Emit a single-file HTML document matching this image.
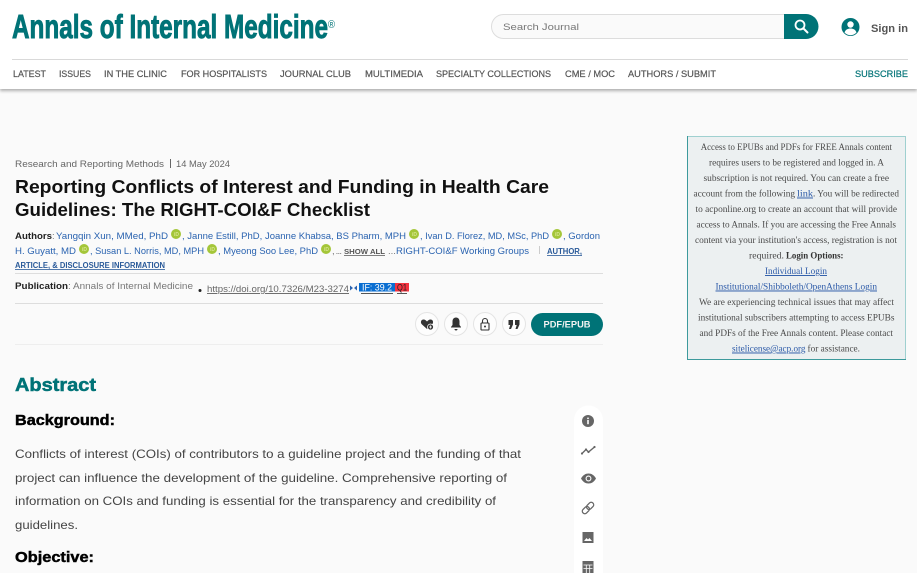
<!DOCTYPE html>
<html lang="en"><head><meta charset="utf-8"><title>Annals of Internal Medicine</title>
<style>
html,body{margin:0;padding:0;width:917px;height:573px;overflow:hidden;background:#fafafa}
#hd{position:absolute;left:0;top:0;width:917px;height:89px;background:#fff;box-shadow:0 2px 3px rgba(0,0,0,.3)}
svg{position:absolute;left:0;top:0;filter:blur(.3px)}
text{font-family:"Liberation Sans",sans-serif}
.nav{font-size:9.5px;fill:#555;stroke:#555;stroke-width:.2}
.meta{font-size:9.5px;fill:#666}
.title{font-size:18px;font-weight:700;fill:#111}
.au{font-size:9.5px;fill:#2a63b0}
.bk{font-size:9.5px;font-weight:700;fill:#222}
.gr{font-size:9.5px;fill:#777}
.sm{font-size:8px;font-weight:700;fill:#2a5a99}
.body{font-size:12px;fill:#444}
.h{font-size:15px;font-weight:700;fill:#000;stroke:#000;stroke-width:.45}
.s{font-family:"Liberation Serif",serif;font-size:9.5px;fill:#4a4a4a}
.sl{font-family:"Liberation Serif",serif;font-size:9.5px;fill:#2c5aa8}
.o{fill:#a4c639}
.i{font-size:5px;fill:#d6e58f;font-weight:700}
</style></head><body>
<div id="hd"></div>
<svg width="917" height="573" viewBox="0 0 917 573" xmlns="http://www.w3.org/2000/svg">
<!-- logo -->
<text x="12" y="38" font-size="33" font-weight="700" fill="#007377" stroke="#007377" stroke-width=".9" textLength="316" lengthAdjust="spacingAndGlyphs">Annals of Internal Medicine</text>
<text x="328" y="28" font-size="11" fill="#007377" textLength="7" lengthAdjust="spacingAndGlyphs">®</text>
<!-- search -->
<rect x="491.500" y="14.500" width="326" height="24" rx="12" fill="#fafafa" stroke="#ddd"/>
<path d="M784 14h22a12.500 12.500 0 0 1 0 25h-22z" fill="#007377"/>
<circle cx="800" cy="25" r="4.500" fill="none" stroke="#fff" stroke-width="1.800"/><path d="M803.500 28.500l4 4" stroke="#fff" stroke-width="2" stroke-linecap="round"/>
<text x="503" y="30" font-size="9.500" fill="#777" textLength="76" lengthAdjust="spacingAndGlyphs">Search Journal</text>
<circle cx="850.500" cy="27" r="9" fill="#007377"/><circle cx="850.500" cy="24.500" r="3.200" fill="#fff"/><path d="M844.500 32.500c1-3 3.500-4 6-4s5 1 6 4a8 8 0 0 1-12 0z" fill="#fff"/>
<text x="871" y="32" font-size="11" font-weight="700" fill="#555" textLength="37" lengthAdjust="spacingAndGlyphs">Sign in</text>
<!-- nav -->
<rect x="12" y="59" width="896" height="1" fill="#d9d9d9"/>
<text class="nav" x="13" y="77" textLength="33" lengthAdjust="spacingAndGlyphs">LATEST</text>
<text class="nav" x="59" y="77" textLength="32" lengthAdjust="spacingAndGlyphs">ISSUES</text>
<text class="nav" x="104" y="77" textLength="63" lengthAdjust="spacingAndGlyphs">IN THE CLINIC</text>
<text class="nav" x="181" y="77" textLength="86" lengthAdjust="spacingAndGlyphs">FOR HOSPITALISTS</text>
<text class="nav" x="280" y="77" textLength="71" lengthAdjust="spacingAndGlyphs">JOURNAL CLUB</text>
<text class="nav" x="365" y="77" textLength="58" lengthAdjust="spacingAndGlyphs">MULTIMEDIA</text>
<text class="nav" x="436" y="77" textLength="115" lengthAdjust="spacingAndGlyphs">SPECIALTY COLLECTIONS</text>
<text class="nav" x="565" y="77" textLength="50" lengthAdjust="spacingAndGlyphs">CME / MOC</text>
<text class="nav" x="628" y="77" textLength="88" lengthAdjust="spacingAndGlyphs">AUTHORS / SUBMIT</text>
<text class="nav" x="855" y="77" textLength="53" lengthAdjust="spacingAndGlyphs" style="fill:#007377;stroke:#007377">SUBSCRIBE</text>
<!-- meta -->
<text class="meta" x="15" y="167" textLength="149" lengthAdjust="spacingAndGlyphs">Research and Reporting Methods</text>
<rect x="170" y="159" width="1" height="9" fill="#666"/>
<text class="meta" x="176" y="167" textLength="54" lengthAdjust="spacingAndGlyphs">14 May 2024</text>
<!-- title -->
<text class="title" x="15" y="193" textLength="534" lengthAdjust="spacingAndGlyphs">Reporting Conflicts of Interest and Funding in Health Care</text>
<text class="title" x="15" y="216" textLength="355" lengthAdjust="spacingAndGlyphs">Guidelines: The RIGHT-COI&amp;F Checklist</text>
<!-- authors -->
<text class="bk" x="15" y="239" textLength="37" lengthAdjust="spacingAndGlyphs">Authors</text><text class="gr" x="52" y="239">:</text>
<text class="au" x="56" y="239" textLength="112" lengthAdjust="spacingAndGlyphs">Yangqin Xun, MMed, PhD</text>
<circle class="o" cx="176" cy="234" r="5"/><text class="i" x="174" y="236">iD</text>
<text class="au" x="182" y="239" textLength="224" lengthAdjust="spacingAndGlyphs">, Janne Estill, PhD, Joanne Khabsa, BS Pharm, MPH</text>
<circle class="o" cx="414" cy="234" r="5"/><text class="i" x="412" y="236">iD</text>
<text class="au" x="420" y="239" textLength="129" lengthAdjust="spacingAndGlyphs">, Ivan D. Florez, MD, MSc, PhD</text>
<circle class="o" cx="557" cy="234" r="5"/><text class="i" x="555" y="236">iD</text>
<text class="au" x="563" y="239" textLength="37" lengthAdjust="spacingAndGlyphs">, Gordon</text>
<text class="au" x="15" y="254" textLength="61" lengthAdjust="spacingAndGlyphs">H. Guyatt, MD</text>
<circle class="o" cx="84" cy="249" r="5"/><text class="i" x="82" y="251">iD</text>
<text class="au" x="90" y="254" textLength="114" lengthAdjust="spacingAndGlyphs">, Susan L. Norris, MD, MPH</text>
<circle class="o" cx="212" cy="249" r="5"/><text class="i" x="210" y="251">iD</text>
<text class="au" x="218" y="254" textLength="100" lengthAdjust="spacingAndGlyphs">, Myeong Soo Lee, PhD</text>
<circle class="o" cx="326" cy="249" r="5"/><text class="i" x="324" y="251">iD</text>
<text class="gr" x="332" y="254" textLength="10" lengthAdjust="spacing">, ...</text>
<text x="344" y="254" font-size="7.500" font-weight="700" fill="#555" text-decoration="underline" textLength="41" lengthAdjust="spacingAndGlyphs">SHOW ALL</text>
<text class="gr" x="388" y="254">...</text>
<text class="au" x="396" y="254" textLength="133" lengthAdjust="spacingAndGlyphs">RIGHT-COI&amp;F Working Groups</text>
<rect x="539" y="246" width="1" height="8" fill="#ccc"/>
<text class="sm" x="547" y="254" text-decoration="underline" textLength="35" lengthAdjust="spacingAndGlyphs">AUTHOR,</text>
<text class="sm" x="15" y="268" text-decoration="underline" textLength="150" lengthAdjust="spacingAndGlyphs">ARTICLE, &amp; DISCLOSURE INFORMATION</text>
<rect x="15" y="273" width="588" height="1" fill="#ddd"/>
<!-- publication -->
<text class="bk" x="15" y="289" textLength="53" lengthAdjust="spacingAndGlyphs">Publication</text>
<text class="gr" x="68" y="289" textLength="125" lengthAdjust="spacingAndGlyphs">: Annals of Internal Medicine</text>
<circle cx="200" cy="290.500" r="1.500" fill="#222"/>
<text x="207" y="292" font-size="9.500" fill="#666" text-decoration="underline" textLength="142" lengthAdjust="spacingAndGlyphs">https://doi.org/10.7326/M23-3274</text>
<path d="M350 285.500l3 2.500-3 2.500zM357 285.500l-3 2.500 3 2.500z" fill="#2a63b0"/>
<rect x="359" y="283" width="36" height="8.500" fill="#0a6ed1"/>
<text x="362" y="290.500" font-size="9.500" fill="#fff" textLength="30" lengthAdjust="spacingAndGlyphs">IF: 39.2</text>
<rect x="395" y="283" width="14" height="8.500" fill="#f5333f"/>
<text x="397" y="290.500" font-size="9.500" fill="#222" textLength="10" lengthAdjust="spacingAndGlyphs">Q1</text>
<rect x="361" y="293" width="32" height="1" fill="#555"/><rect x="397" y="293" width="10" height="1" fill="#555"/>
<rect x="15" y="303" width="588" height="1" fill="#ddd"/>
<!-- action buttons -->
<g fill="#fdfdfd" stroke="#e4e4e4"><circle cx="427" cy="324" r="11.500"/><circle cx="456" cy="324" r="11.500"/><circle cx="485" cy="324" r="11.500"/><circle cx="514" cy="324" r="11.500"/></g>
<path d="M427 329l-5-4.500c-2-2-1-5 1.500-5 1.500 0 2.500 1 3.500 2 1-1 2-2 3.500-2 2.500 0 3.500 3 1.500 5z" fill="#333"/>
<circle cx="430.500" cy="327" r="3" fill="#333" stroke="#fdfdfd" stroke-width=".8"/><path d="M429 327h3M430.500 325.500v3" stroke="#fff" stroke-width=".8"/>
<path d="M456 317.500c-2.500 0-3.500 2-3.500 4v3.500l-1.500 2v.5h10v-.5l-1.500-2v-3.500c0-2-1-4-3.500-4z" fill="#333"/><path d="M454.500 329h3a1.500 1.500 0 0 1-3 0z" fill="#333"/>
<rect x="481" y="323" width="8" height="7" rx=".8" fill="none" stroke="#333" stroke-width="1.100"/><path d="M482.500 323v-2a2.500 2.500 0 0 1 5 0v2" fill="none" stroke="#333" stroke-width="1.100"/><circle cx="485" cy="326.500" r="1" fill="#333"/>
<path d="M508.500 320h4.500v4.500l-2 4.500h-2l1.200-4h-1.700zM515 320h4.500v4.500l-2 4.500h-2l1.200-4H515z" fill="#333"/>
<rect x="531" y="313" width="72" height="23" rx="11.500" fill="#007377"/>
<text x="543.500" y="327.500" font-size="9.500" font-weight="700" fill="#f2f2f2" textLength="47" lengthAdjust="spacingAndGlyphs">PDF/EPUB</text>
<rect x="15" y="344" width="588" height="1" fill="#eee"/>
<!-- abstract -->
<text x="15" y="391" font-size="18" font-weight="700" fill="#007377" stroke="#007377" stroke-width=".5" textLength="81" lengthAdjust="spacingAndGlyphs">Abstract</text>
<text class="h" x="15" y="425" textLength="100" lengthAdjust="spacingAndGlyphs">Background:</text>
<text class="body" x="15" y="458" textLength="506" lengthAdjust="spacingAndGlyphs">Conflicts of interest (COIs) of contributors to a guideline project and the funding of that</text>
<text class="body" x="15" y="482" textLength="492" lengthAdjust="spacingAndGlyphs">project can influence the development of the guideline. Comprehensive reporting of</text>
<text class="body" x="15" y="505" textLength="481" lengthAdjust="spacingAndGlyphs">information on COIs and funding is essential for the transparency and credibility of</text>
<text class="body" x="15" y="529" textLength="63" lengthAdjust="spacingAndGlyphs">guidelines.</text>
<text class="h" x="15" y="562" textLength="79" lengthAdjust="spacingAndGlyphs">Objective:</text>
<!-- toolbar -->
<path d="M574 573V420a14.500 14.500 0 0 1 29 0v153z" fill="#fff"/>
<circle cx="588" cy="421" r="6" fill="#666"/><rect x="587.200" y="420" width="1.600" height="4.200" fill="#fff"/><rect x="587.200" y="417.600" width="1.600" height="1.500" fill="#fff"/>
<path d="M582 453.500l4-4 2.500 2.500 6-5" fill="none" stroke="#666" stroke-width="1.400"/><g fill="#666"><circle cx="582" cy="453.500" r="1.100"/><circle cx="586" cy="449.500" r="1.100"/><circle cx="588.500" cy="452" r="1.100"/><circle cx="594.500" cy="447" r="1.100"/></g>
<path d="M581 478.500c2-3.500 4.500-5 7.500-5s5.500 1.500 7.500 5c-2 3.500-4.500 5-7.500 5s-5.500-1.500-7.500-5z" fill="#666"/><circle cx="588.500" cy="478.500" r="2.400" fill="none" stroke="#fff" stroke-width="1.100"/>
<g fill="none" stroke="#666" stroke-width="1.300" transform="rotate(-45 588 508)"><rect x="581" y="505.500" width="8" height="5" rx="2.500"/><rect x="587" y="505.500" width="8" height="5" rx="2.500"/></g>
<rect x="582.500" y="532" width="11" height="11" fill="#666"/><path d="M584 541l2.500-3 1.500 1.500 1.500-1.500 2.500 3z" fill="#fff"/>
<rect x="582.500" y="561" width="11" height="12" fill="#666"/><path d="M583.500 565h9M586.300 565v8M589.700 565v8M583.500 568.500h9" stroke="#fff" stroke-width=".8"/>
<!-- notice box -->
<rect x="687.500" y="136.500" width="218" height="223" fill="#ecf0f1" stroke="#9fd0d0"/>
<path d="M687.500 136v223.500h218.500" fill="none" stroke="#3d9a9c"/>
<text class="s" x="700.700" y="150" textLength="191.300" lengthAdjust="spacingAndGlyphs">Access to EPUBs and PDFs for FREE Annals content</text>
<text class="s" x="709" y="165.500" textLength="175" lengthAdjust="spacingAndGlyphs">requires users to be registered and logged in. A</text>
<text class="s" x="703.500" y="181" textLength="185.500" lengthAdjust="spacingAndGlyphs">subscription is not required. You can create a free</text>
<text class="s" x="693.500" y="196.500" textLength="101.500" lengthAdjust="spacingAndGlyphs">account from the following</text>
<text class="sl" x="797" y="196.500" text-decoration="underline" textLength="16" lengthAdjust="spacingAndGlyphs">link</text>
<text class="s" x="813" y="196.500" textLength="86" lengthAdjust="spacingAndGlyphs">. You will be redirected</text>
<text class="s" x="695.500" y="212" textLength="201.500" lengthAdjust="spacingAndGlyphs">to acponline.org to create an account that will provide</text>
<text class="s" x="696.500" y="227.500" textLength="199.500" lengthAdjust="spacingAndGlyphs">access to Annals. If you are accessing the Free Annals</text>
<text class="s" x="695" y="243" textLength="202" lengthAdjust="spacingAndGlyphs">content via your institution's access, registration is not</text>
<text class="s" x="749" y="258.500" textLength="35" lengthAdjust="spacingAndGlyphs">required.</text>
<text class="s" x="786" y="258.500" style="fill:#333;font-weight:700" textLength="57.500" lengthAdjust="spacingAndGlyphs">Login Options:</text>
<text class="sl" x="765" y="274" text-decoration="underline" textLength="62" lengthAdjust="spacingAndGlyphs">Individual Login</text>
<text class="sl" x="715.500" y="289.500" text-decoration="underline" textLength="161.500" lengthAdjust="spacingAndGlyphs">Institutional/Shibboleth/OpenAthens Login</text>
<text class="s" x="699" y="305" textLength="195" lengthAdjust="spacingAndGlyphs">We are experiencing technical issues that may affect</text>
<text class="s" x="698" y="320.500" textLength="196.500" lengthAdjust="spacingAndGlyphs">institutional subscribers attempting to access EPUBs</text>
<text class="s" x="699.500" y="336" textLength="193.500" lengthAdjust="spacingAndGlyphs">and PDFs of the Free Annals content. Please contact</text>
<text class="sl" x="732" y="351.500" text-decoration="underline" textLength="73.500" lengthAdjust="spacingAndGlyphs">sitelicense@acp.org</text>
<text class="s" x="807.500" y="351.500" textLength="52.500" lengthAdjust="spacingAndGlyphs">for assistance.</text>
</svg>
</body></html>
